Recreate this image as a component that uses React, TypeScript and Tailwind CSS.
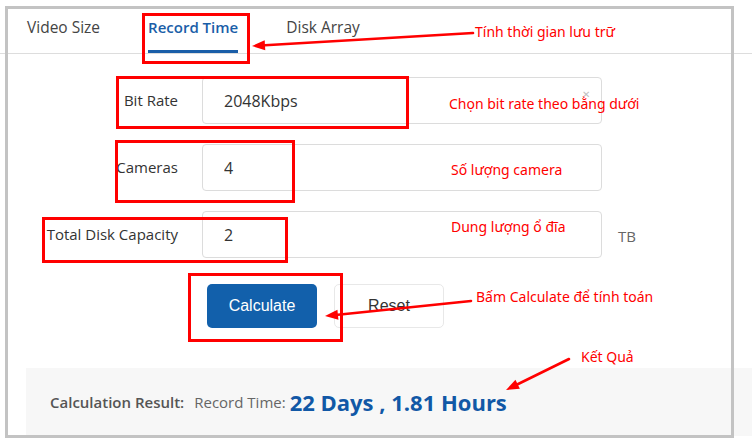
type Pt = [number, number];

function Arrow({ from, to }: { from: Pt; to: Pt }) {
  const dx = to[0] - from[0];
  const dy = to[1] - from[1];
  const len = Math.hypot(dx, dy);
  const ux = dx / len;
  const uy = dy / len;
  const headLen = 13;
  const headHalf = 5;
  const bx = to[0] - ux * headLen;
  const by = to[1] - uy * headLen;
  const p1 = `${to[0]},${to[1]}`;
  const p2 = `${bx - uy * headHalf},${by + ux * headHalf}`;
  const p3 = `${bx + uy * headHalf},${by - ux * headHalf}`;
  return (
    <g>
      <line x1={from[0]} y1={from[1]} x2={bx} y2={by} stroke="#ff0000" strokeWidth={2.6} strokeLinecap="round" />
      <polygon points={`${p1} ${p2} ${p3}`} fill="#ff0000" />
    </g>
  );
}

function Note({ top, left, children }: { top: number; left: number; children: React.ReactNode }) {
  return (
    <span
      className="absolute whitespace-nowrap text-[14px] leading-[18px] text-[#ff0000] font-['Noto_Sans',sans-serif]"
      style={{ top, left }}
    >
      {children}
    </span>
  );
}

function Row({ label, value, suffix, clear }: { label: string; value: string; suffix?: string; clear?: boolean }) {
  return (
    <div className="flex items-center">
      <label className="w-[178px] text-right text-[15px] text-[#333]">{label}</label>
      <div className="relative ml-[24px]">
        <input
          readOnly
          value={value}
          className="w-[400px] h-[47px] rounded-[4px] border border-[#dcdcdc] bg-white pl-[21px] text-[16px] text-[#333] outline-none"
        />
        {clear && <span className="absolute right-[12px] top-[10px] text-[10px] text-[#c0c0c0]">✕</span>}
      </div>
      {suffix && <span className="ml-[16px] mt-[3px] text-[15px] text-[#666]">{suffix}</span>}
    </div>
  );
}

export default function App() {
  return (
    <div className="relative w-[752px] h-[447px] overflow-hidden bg-white font-['Open_Sans',sans-serif]">
      {/* tabs */}
      <div className="flex h-[54px] border-b border-[#dddddd] pl-[27px] gap-[48px]">
        <div className="flex items-center pt-[5px] border-b-2 border-transparent text-[15.5px] text-[#444]">Video Size</div>
        <div className="flex items-center pt-[5px] border-b-[3px] border-[#1a5ea8] text-[15px] font-semibold text-[#1a5ea8]">Record Time</div>
        <div className="flex items-center pt-[5px] border-b-2 border-transparent text-[15.5px] text-[#444]">Disk Array</div>
      </div>

      {/* form */}
      <div className="flex flex-col gap-[20px] pt-[23px]">
        <Row label="Bit Rate" value="2048Kbps" clear />
        <Row label="Cameras" value="4" />
        <Row label="Total Disk Capacity" value="2" suffix="TB" />
      </div>

      <div className="flex mt-[26px] ml-[207px] gap-[17px]">
        <button className="w-[110px] h-[44px] rounded-[5px] bg-[#1260ab] text-white text-[16px] font-['Liberation_Sans',sans-serif]">
          Calculate
        </button>
        <button className="w-[110px] h-[44px] rounded-[5px] border border-[#e8e8e8] bg-white text-[#333] text-[16px] font-['Liberation_Sans',sans-serif]">
          Reset
        </button>
      </div>

      {/* result */}
      <div className="mt-[40px] ml-[26px] h-[68px] bg-[#f7f7f7] flex items-center pl-[24px]">
        <span className="text-[15px] font-semibold text-[#555]">Calculation Result:</span>
        <span className="ml-[10px] text-[15px] text-[#666]">Record Time:</span>
        <span className="ml-[4px] text-[22px] font-bold text-[#1158a6]">22 Days , 1.81 Hours</span>
      </div>

      {/* screenshot frame */}
      <div className="absolute left-[5px] top-[6px] w-[729px] h-[432px] border-[3px] border-[#c3c3c3] pointer-events-none" />

      {/* annotation boxes */}
      <div className="absolute left-[142px] top-[13px] w-[108px] h-[51px] border-[3px] border-[#ff0000]" />
      <div className="absolute left-[116px] top-[76px] w-[293px] h-[53px] border-[3px] border-[#ff0000]" />
      <div className="absolute left-[115px] top-[140px] w-[180px] h-[63px] border-[3px] border-[#ff0000]" />
      <div className="absolute left-[42px] top-[217px] w-[246px] h-[46px] border-[3px] border-[#ff0000]" />
      <div className="absolute left-[188px] top-[273px] w-[155px] h-[69px] border-[3px] border-[#ff0000]" />

      <svg className="absolute inset-0 pointer-events-none" width={752} height={447}>
        <Arrow from={[473, 33]} to={[252, 46]} />
        <Arrow from={[471, 301]} to={[325, 316]} />
        <Arrow from={[569, 359]} to={[506, 390]} />
      </svg>

      <Note top={23} left={475}>Tính thời gian lưu trữ</Note>
      <Note top={95} left={449}>Chọn bit rate theo bằng dưới</Note>
      <Note top={161} left={451}>Số lượng camera</Note>
      <Note top={218} left={451}>Dung lượng ổ đĩa</Note>
      <Note top={288} left={476}>Bấm Calculate để tính toán</Note>
      <Note top={348} left={581}>Kết Quả</Note>
    </div>
  );
}
